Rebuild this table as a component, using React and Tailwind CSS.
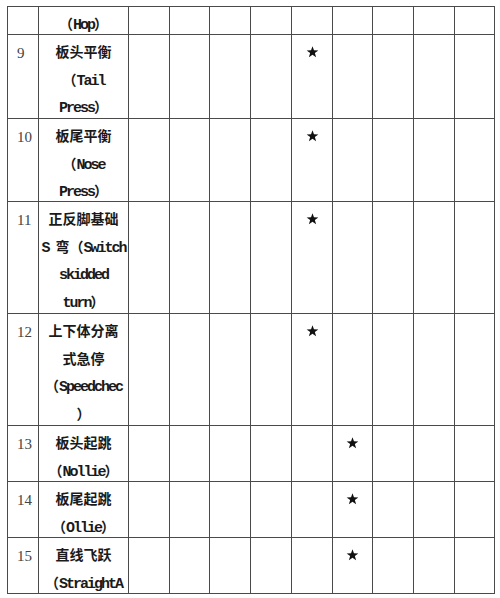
import React from "react";

const rows = [
  { n: "", lines: ["（Hop）"], h: "h-[28px]", star: -1 },
  { n: "9", lines: ["板头平衡", "（Tail", "Press）"], h: "h-[84px]", star: 4 },
  { n: "10", lines: ["板尾平衡", "（Nose", "Press）"], h: "h-[83px]", star: 4 },
  { n: "11", lines: ["正反脚基础", "S 弯（Switch", "skidded", "turn）"], h: "h-[112px]", star: 4 },
  { n: "12", lines: ["上下体分离", "式急停", "（Speedchec", "）"], h: "h-[112px]", star: 4 },
  { n: "13", lines: ["板头起跳", "（Nollie）"], h: "h-[56px]", star: 5 },
  { n: "14", lines: ["板尾起跳", "（Ollie）"], h: "h-[56px]", star: 5 },
  { n: "15", lines: ["直线飞跃", "（StraightA"], h: "h-[56px]", star: 5 },
];

const Star = () => (
  <svg width="13" height="12" viewBox="0 0 24 23" className="block">
    <path
      d="M12 0.5 L14.8 8.3 L23.2 8.5 L16.5 13.6 L18.9 21.8 L12 17 L5.1 21.8 L7.5 13.6 L0.8 8.5 L9.2 8.3 Z"
      fill="#111"
    />
  </svg>
);

// ascii runs get tightened so the mono font keeps half-width steps
const Line = ({ text }) => {
  const parts = text.match(/[\x20-\x7e]+|[^\x20-\x7e]+/g) || [];
  return (
    <div className="whitespace-pre text-center">
      {parts.map((p, i) =>
        /^[\x20-\x7e]+$/.test(p) ? (
          <span key={i} className="text-[15px] tracking-[-2px]">
            {p}
          </span>
        ) : (
          <span key={i}>{p}</span>
        )
      )}
    </div>
  );
};

const App = () => {
  const cell = "border-l border-b border-[#4a4a4a]";
  return (
    <div className="min-h-[598px] w-[500px] bg-white pt-[6px] pl-[7px]">
      <div className="w-[488px] border-t border-[#4a4a4a]">
        {rows.map((r, ri) => (
          <div
            key={ri}
            className={`grid grid-cols-[31px_90px_41px_40px_41px_41px_41px_40px_41px_41px_41px] ${r.h}`}
          >
            <div className={`${cell} overflow-hidden pt-[5px] pl-[9px] text-[15px] leading-[27.5px] text-[#444] font-['Liberation_Serif',serif]`}>
              {r.n}
            </div>
            <div className={`${cell} overflow-hidden pt-[5px] text-[14px] leading-[27.5px] font-bold text-[#1a1a1a] font-['Liberation_Mono','Noto_Sans_CJK_SC',monospace]`}>
              {r.lines.map((l, li) => (
                <Line key={li} text={l} />
              ))}
            </div>
            {Array.from({ length: 9 }).map((_, ci) => (
              <div
                key={ci}
                className={`${cell} ${ci === 8 ? "border-r" : ""} flex justify-center pt-[11px]`}
              >
                {ci === r.star && <Star />}
              </div>
            ))}
          </div>
        ))}
      </div>
    </div>
  );
};

export default App;
